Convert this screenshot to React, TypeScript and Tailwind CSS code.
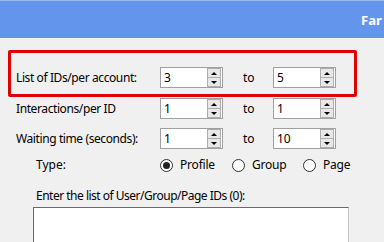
import React from 'react'

function Spinner() {
  return (
    <div className="flex flex-col w-[14px] h-[19px] mr-[1px]">
      <div className="flex-1 border border-[#adadad] bg-[#e8e8e8] flex items-center justify-center">
        <div className="w-0 h-0 border-l-[3px] border-r-[3px] border-b-[3px] border-l-transparent border-r-transparent border-b-black" />
      </div>
      <div className="flex-1 border border-t-0 border-[#adadad] bg-[#e8e8e8] flex items-center justify-center">
        <div className="w-0 h-0 border-l-[3px] border-r-[3px] border-t-[3px] border-l-transparent border-r-transparent border-t-black" />
      </div>
    </div>
  )
}

function NumberBox({ value }: { value: string }) {
  return (
    <div className="w-[63px] h-[21px] bg-white border border-[#a0a0a0] flex items-center justify-between">
      <span className="pl-[3px] text-[12px] leading-none text-[#000]">{value}</span>
      <Spinner />
    </div>
  )
}

function RangeRow({ label, from, to }: { label: string; from: string; to: string }) {
  return (
    <div className="flex items-center">
      <div className="w-[144px] text-[12px] text-black tracking-[-0.4px]">{label}</div>
      <NumberBox value={from} />
      <div className="w-[50px] pl-[20px] text-[12px] text-black">to</div>
      <NumberBox value={to} />
    </div>
  )
}

function Radio({ label, checked, width }: { label: string; checked?: boolean; width: string }) {
  return (
    <div className={`flex items-center ${width}`}>
      <div className="w-[13px] h-[13px] rounded-full border border-[#333] bg-white flex items-center justify-center">
        {checked && <div className="w-[7px] h-[7px] rounded-full bg-[#222]" />}
      </div>
      <span className="ml-[7px] text-[12px] text-black tracking-[-0.2px]">{label}</span>
    </div>
  )
}

export default function App() {
  return (
    <div className="w-[384px] h-[242px] overflow-hidden bg-[#f0f0f0] font-['Noto_Sans',sans-serif] antialiased">
      <div className="h-[38px] bg-[#6495ed] border-t border-[#9db8ec] flex items-center">
        <span className="ml-[361px] pt-[2px] text-[13px] font-bold text-white whitespace-nowrap">Far</span>
      </div>

      {/* highlighted row */}
      <div className="mt-[12px] ml-[8px] w-[349px] h-[47px] border-[3px] border-[#e00000] rounded-[2px] pt-[14px] pl-[5px]">
        <RangeRow label="List of IDs/per account:" from="3" to="5" />
      </div>

      <div className="mt-[1px] pl-[16px]">
        <RangeRow label="Interactions/per ID" from="1" to="1" />
      </div>
      <div className="mt-[9px] pl-[16px]">
        <RangeRow label="Waiting time (seconds):" from="1" to="10" />
      </div>

      <div className="mt-[8px] h-[16px] flex items-center pl-[36px]">
        <div className="w-[124px] text-[12px] text-black">Type:</div>
        <Radio label="Profile" checked width="w-[72px]" />
        <Radio label="Group" width="w-[71px]" />
        <Radio label="Page" width="w-[60px]" />
      </div>

      <div className="mt-[15px] pl-[36px] text-[12px] leading-[16px] text-black tracking-[-0.5px]">
        Enter the list of User/Group/Page IDs (0):
      </div>
      <div className="mt-[3px] ml-[33px] w-[316px] h-[60px] bg-white border border-[#c8c8c8] border-t-[#696969] border-l-[#696969]" />
    </div>
  )
}
